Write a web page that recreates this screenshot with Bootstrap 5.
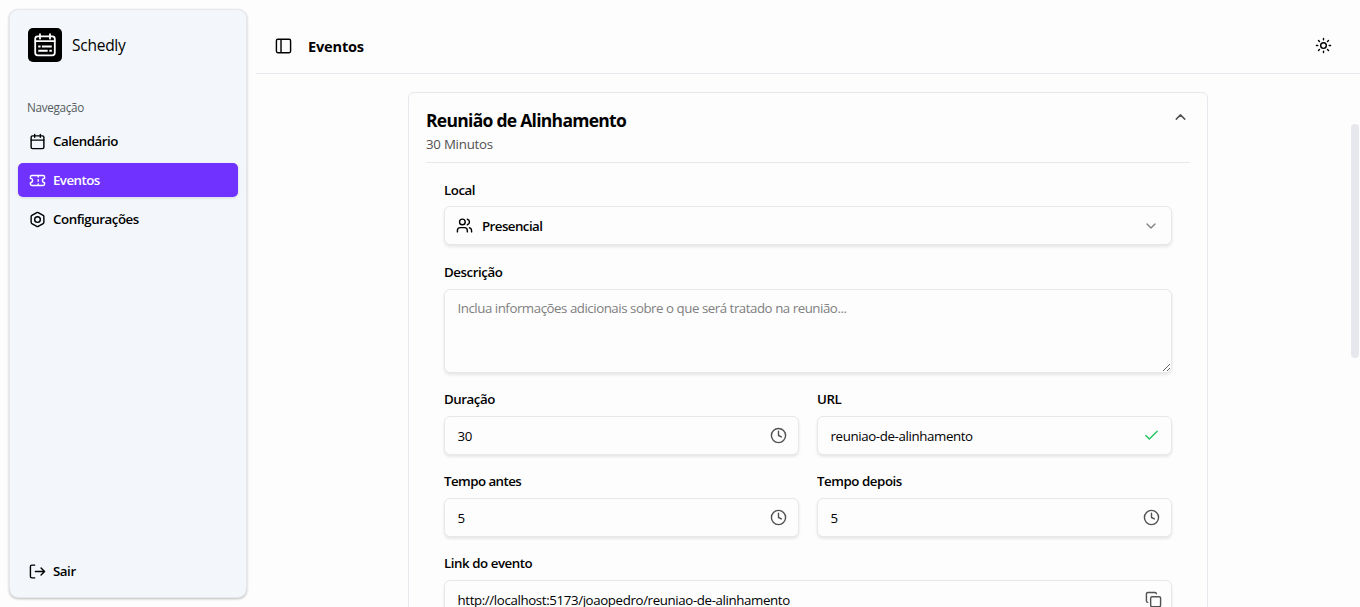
<!DOCTYPE html>
<html lang="pt-BR">
<head>
<meta charset="utf-8">
<meta name="viewport" content="width=device-width, initial-scale=1">
<title>Schedly</title>
<link href="https://cdn.jsdelivr.net/npm/bootstrap@5.3.0/dist/css/bootstrap.min.css" rel="stylesheet">
<style>
body{font-family:"Open Sans","Noto Sans",sans-serif;background:#fdfdfd;color:#000;font-size:13.3px;line-height:20px;letter-spacing:-.45px}
svg{fill:none;stroke:currentColor;stroke-width:2;stroke-linecap:round;stroke-linejoin:round;flex:none;display:block}
.fw-mid{font-weight:600}
.side-wrap{width:256px;padding:9px}
.side-panel{background:#f3f7fb;border:1px solid #e5e7eb;border-radius:9px;box-shadow:0 1px 3px rgba(0,0,0,.17),0 1px 2px rgba(0,0,0,.1);padding:18px 8px 9px}
.brand-row{padding-left:10px;gap:10px;height:34px}
.brand-name{font-size:15.5px;letter-spacing:-.25px;font-weight:500}
.logo-box{width:34px;height:34px;background:#000;border-radius:5px;color:#fff}
.side-label{font-size:11.7px;letter-spacing:-.3px;color:#555b61;line-height:16px;margin:37px 0 9px 9px}
.side-link{height:34px;padding-left:11px;gap:7px;border-radius:5px;margin-bottom:5px;color:#000;text-decoration:none;display:flex;align-items:center}
.side-link.active{background:#7033ff;color:#fff;box-shadow:0 1px 3px rgba(0,0,0,.12)}
.top-bar{height:74px;border-bottom:1px solid #e7e7ee;padding:17px 28px 0 19px}
.top-row{height:57px}
.page-name{font-size:14.6px;letter-spacing:-.2px;margin-left:16px}
.event-card{width:800px;margin:18px auto 0;border:1px solid #e7e7ee;border-radius:6px;padding:0 17px;background:#fdfdfd}
.event-head{height:70px;border-bottom:1px solid #e7e7ee;padding:14px 1px 0 0}
.event-title{font-size:17.5px;line-height:26px;font-weight:700;margin:0;letter-spacing:-.72px}
.event-time{font-weight:500;letter-spacing:-.25px;display:block;line-height:23px}
.event-head svg{margin-top:1px}
.muted-c{color:#525252}
.form-area{padding:19px 18px 0;gap:19px}
.field-label{display:block;line-height:16px;height:24px;font-weight:600}
.label-low{height:25px}
.two-cols .field-label,.link-row .field-label{line-height:14px}
.tight{letter-spacing:-.55px}
.pick-value{gap:9px}
.field-box{height:39px;border:1px solid #e8e8ec;border-radius:6px;background:#fdfdfd;box-shadow:0 2px 3px rgba(0,0,0,.09);padding:0 11px 0 12.5px;display:flex;align-items:center;justify-content:space-between;letter-spacing:-.38px}
.field-box svg{margin-bottom:1px}
.pick-box{padding:0 12px 0 11px}
.pick-box svg{margin-bottom:0}
.link-row .field-box{padding-right:9px}
.area-box{display:block;width:100%;height:84px;border:1px solid #e8e8ec;border-radius:6px;background:#fdfdfd;box-shadow:0 2px 3px rgba(0,0,0,.09);padding:8px 12.5px;resize:vertical;outline:0;line-height:20px;letter-spacing:-.47px}
.area-box::placeholder{color:#808080;opacity:1}
.soft-c{color:#808080}
.ok-c{color:#20c55f}
.two-cols{display:grid;grid-template-columns:1fr 1fr;column-gap:18px}
.scroll-thumb{position:absolute;right:1px;top:124px;width:8px;height:234px;border-radius:4px;background:#e7e7ee}
</style>
</head>
<body>
<div class="d-flex vh-100 overflow-hidden position-relative">
  <aside class="side-wrap flex-shrink-0 d-flex">
    <div class="side-panel flex-fill d-flex flex-column">
      <div class="brand-row d-flex align-items-center">
        <div class="logo-box d-flex align-items-center justify-content-center">
          <svg width="26" height="26" viewBox="0 0 26 26"><rect x="3.200" y="4.300" width="19.600" height="19" rx="2.500" stroke-width="1.800"/><path d="M8 2.200v4.500M18 2.200v4.500M3.500 9.200h19" stroke-width="1.800"/><path d="M7.200 14.500h.4M10.800 14.500h8M7.200 18.800h7.500M18.300 18.800h.6" stroke-width="1.900" stroke-linecap="square"/></svg>
        </div>
        <span class="brand-name">Schedly</span>
      </div>
      <div class="side-label">Navegação</div>
      <nav>
        <a class="side-link fw-mid" href="#"><svg width="17" height="17" viewBox="0 0 24 24"><path d="M8 2v4M16 2v4M3 10h18"/><rect x="3" y="4" width="18" height="18" rx="2"/></svg><span>Calendário</span></a>
        <a class="side-link active fw-mid tight" href="#"><svg width="17" height="17" viewBox="0 0 24 24"><path d="M2 9a3 3 0 0 1 0 6v2a2 2 0 0 0 2 2h16a2 2 0 0 0 2-2v-2a3 3 0 0 1 0-6V7a2 2 0 0 0-2-2H4a2 2 0 0 0-2 2ZM13 5v2M13 17v2M13 11v2"/></svg><span>Eventos</span></a>
        <a class="side-link fw-mid" href="#"><svg width="17" height="17" viewBox="0 0 24 24"><path d="M21 16V8a2 2 0 0 0-1-1.730l-7-4a2 2 0 0 0-2 0l-7 4A2 2 0 0 0 3 8v8a2 2 0 0 0 1 1.730l7 4a2 2 0 0 0 2 0l7-4A2 2 0 0 0 21 16z"/><circle cx="12" cy="12" r="4"/></svg><span>Configurações</span></a>
      </nav>
      <a class="side-link fw-mid mt-auto mb-0" href="#"><svg width="17" height="17" viewBox="0 0 24 24"><path d="M8 3H4a2 2 0 0 0-2 2v14a2 2 0 0 0 2 2h4M9 12h13M17 7l5 5-5 5"/></svg><span>Sair</span></a>
    </div>
  </aside>
  <main class="flex-fill">
    <header class="top-bar">
      <div class="top-row d-flex align-items-center">
        <svg width="17" height="18" viewBox="0 0 24 24"><rect x="2" y="2.500" width="20" height="19" rx="2"/><path d="M8.500 3v18"/></svg>
        <span class="page-name fw-bold">Eventos</span>
        <svg class="ms-auto" width="17" height="17" viewBox="0 0 24 24"><circle cx="12" cy="12" r="4"/><path d="M12 2v2M12 20v2M4.930 4.930l1.410 1.410M17.660 17.660l1.410 1.410M2 12h2M20 12h2M6.340 17.660l-1.410 1.410M19.070 4.930l-1.410 1.410"/></svg>
      </div>
    </header>
    <section class="event-card">
      <div class="event-head d-flex justify-content-between align-items-start">
        <div><h1 class="event-title">Reunião de Alinhamento</h1><span class="event-time muted-c">30 Minutos</span></div>
        <svg class="muted-c" width="17" height="18" viewBox="0 0 24 24"><path d="m18 15-6-6-6 6"/></svg>
      </div>
      <form class="form-area d-flex flex-column">
        <div>
          <label class="field-label">Local</label>
          <div class="field-box pick-box fw-mid"><span class="pick-value d-flex align-items-center tight"><svg width="17" height="17" viewBox="0 0 24 24"><path d="M16 21v-2a4 4 0 0 0-4-4H6a4 4 0 0 0-4 4v2M22 21v-2a4 4 0 0 0-3-3.870M16 3.130a4 4 0 0 1 0 7.750"/><circle cx="9" cy="7" r="4"/></svg>Presencial</span><svg class="soft-c" width="16" height="16" viewBox="0 0 24 24"><path d="m6 9 6 6 6-6"/></svg></div>
        </div>
        <div>
          <label class="field-label label-low">Descrição</label>
          <textarea class="area-box" placeholder="Inclua informações adicionais sobre o que será tratado na reunião..."></textarea>
        </div>
        <div class="two-cols">
          <div><label class="field-label">Duração</label><div class="field-box"><span>30</span><svg class="muted-c" width="17" height="17" viewBox="0 0 24 24"><circle cx="12" cy="12" r="10"/><path d="M12 6v6l4 2"/></svg></div></div>
          <div><label class="field-label">URL</label><div class="field-box"><span>reuniao-de-alinhamento</span><svg class="ok-c" width="17" height="17" viewBox="0 0 24 24"><path d="M20 6 9 17l-5-5"/></svg></div></div>
        </div>
        <div class="two-cols">
          <div><label class="field-label tight">Tempo antes</label><div class="field-box"><span>5</span><svg class="muted-c" width="17" height="17" viewBox="0 0 24 24"><circle cx="12" cy="12" r="10"/><path d="M12 6v6l4 2"/></svg></div></div>
          <div><label class="field-label">Tempo depois</label><div class="field-box"><span>5</span><svg class="muted-c" width="17" height="17" viewBox="0 0 24 24"><circle cx="12" cy="12" r="10"/><path d="M12 6v6l4 2"/></svg></div></div>
        </div>
        <div class="link-row">
          <label class="field-label">Link do evento</label>
          <div class="field-box"><span>http://localhost:5173/joaopedro/reuniao-de-alinhamento</span><svg class="muted-c" width="17" height="17" viewBox="0 0 24 24"><rect x="8" y="8" width="14" height="14" rx="2"/><path d="M4 16c-1.100 0-2-.9-2-2V4c0-1.100.9-2 2-2h10c1.100 0 2 .9 2 2"/></svg></div>
        </div>
      </form>
    </section>
  </main>
  <div class="scroll-thumb"></div>
</div>
<script src="https://cdn.jsdelivr.net/npm/bootstrap@5.3.0/dist/js/bootstrap.bundle.min.js"></script>
</body>
</html>
